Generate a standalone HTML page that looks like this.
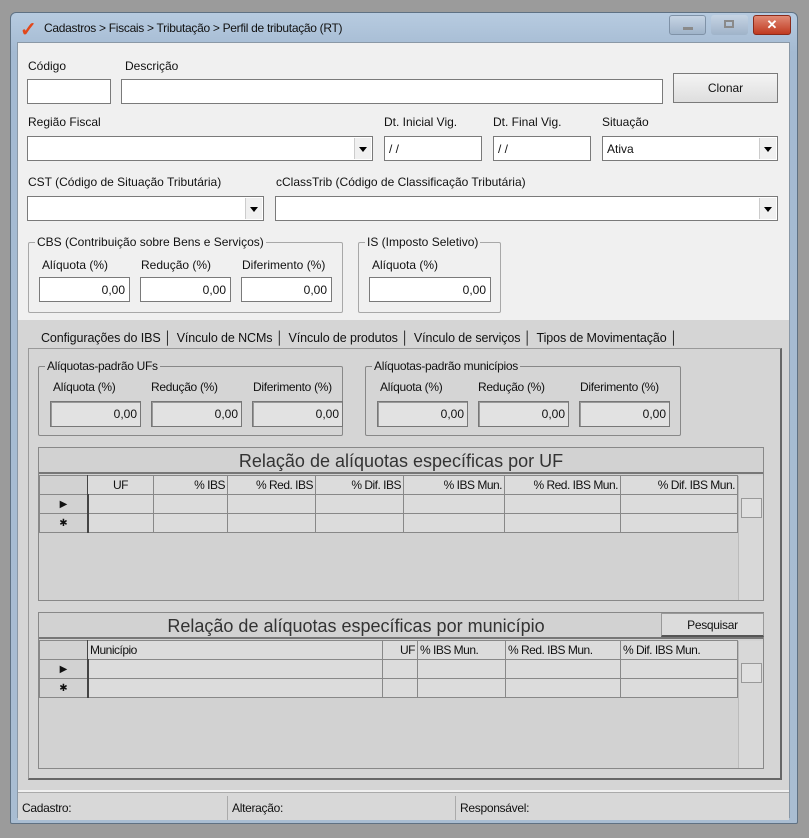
<!DOCTYPE html>
<html><head><meta charset="utf-8"><style>
*{box-sizing:border-box;margin:0;padding:0}
body{width:809px;height:838px;background:#9b9b9b;position:relative;overflow:hidden;font-family:"Liberation Sans",sans-serif;font-size:12px;color:#111}
.a{position:absolute}
.win{left:10px;top:12px;width:788px;height:812px;background:linear-gradient(#b7cbe0,#a4bad2 40px,#a9bdd2);border:1px solid #5f7183;border-radius:6px 6px 2px 2px}
.client{left:17px;top:42px;width:773px;height:776px;background:#f0f0f0;border:1px solid #8a98a6}
.in{position:absolute;background:#fff;border:1px solid #7a7a7a;height:25px;font-size:12px;padding:5px 4px;text-align:right}
.lb{position:absolute;font-size:12px;white-space:nowrap}
.dd{position:absolute;right:1px;top:1px;width:17px;bottom:1px;background:#f0f0f0;border-left:1px solid #ccc}
.dd:after{content:"";position:absolute;left:4px;top:9px;border:4.5px solid transparent;border-top:5px solid #000}
.grp{position:absolute;border:1px solid #a8a8a8;border-radius:2px}
.grp>span{position:absolute;top:-8px;left:6px;background:inherit;padding:0 2px;font-size:12px;white-space:nowrap}
.low{left:18px;top:320px;width:771px;height:470px;background:#d5d5d5}
.l2{font-size:12px;letter-spacing:-0.3px}
.ro{position:absolute;background:#e2e2e2;border:1px solid #777;height:26px;font-size:12px;padding:5px 3px;text-align:right;box-shadow:inset 1px 1px 0 #999}
.panel{position:absolute;border:1px solid #888;background:#d2d2d2}
.title{position:absolute;left:0;right:0;top:0;height:26px;border-bottom:2px solid #777;font-size:18px;text-align:center;color:#333;line-height:26px}
table{position:absolute;border-collapse:collapse;font-size:12px;letter-spacing:-0.5px}
td{border:1px solid #888;background:#dcdcdc;height:19px;padding:0 2px;white-space:nowrap;text-align:right;overflow:hidden}
td.rh{background:#d2d2d2;border-right:2px solid #444;text-align:center;font-size:10px}
.st{position:absolute;top:796px;height:24px;font-size:12px;letter-spacing:-0.3px;padding:5px 4px;border-right:1px solid #aaa}
.tabs span{display:inline-block;margin-right:5px}
</style></head><body>
<div class="a win"></div>
<div class="a" style="left:20px;top:17px;font-size:20px;color:#e2481b;font-weight:bold">✓</div>
<div class="a" style="left:44px;top:21px;font-size:12px;letter-spacing:-0.3px;color:#111">Cadastros &gt; Fiscais &gt; Tributação &gt; Perfil de tributação (RT)</div>
<div class="a" style="left:669px;top:15px;width:37px;height:20px;border:1px solid #7f92a7;border-radius:3px;background:linear-gradient(#c6d4e4,#9fb3c9)"><div class="a" style="left:13px;top:11px;width:10px;height:3px;background:#8a8a8a"></div></div>
<div class="a" style="left:711px;top:15px;width:37px;height:20px;border-radius:3px;background:linear-gradient(#c6d4e4,#9fb3c9)"><div class="a" style="left:13px;top:5px;width:10px;height:8px;border:2px solid #8a8a8a"></div></div>
<div class="a" style="left:753px;top:15px;width:38px;height:20px;border:1px solid #8a2a1a;border-radius:3px;background:linear-gradient(#e08a76,#c03a20);color:#fff;font-weight:bold;text-align:center;font-size:13px;line-height:18px">✕</div>
<div class="a client"></div>

<div class="lb" style="left:28px;top:59px">Código</div>
<div class="lb" style="left:125px;top:59px">Descrição</div>
<div class="in" style="left:27px;top:79px;width:84px"></div>
<div class="in" style="left:121px;top:79px;width:542px"></div>
<div class="a" style="left:673px;top:73px;width:105px;height:30px;border:1px solid #7a7a7a;background:linear-gradient(#f4f4f4,#dedede);text-align:center;line-height:28px">Clonar</div>

<div class="lb" style="left:28px;top:115px">Região Fiscal</div>
<div class="lb" style="left:384px;top:115px">Dt. Inicial Vig.</div>
<div class="lb" style="left:493px;top:115px">Dt. Final Vig.</div>
<div class="lb" style="left:602px;top:115px">Situação</div>
<div class="in" style="left:27px;top:136px;width:346px"><div class="dd"></div></div>
<div class="in" style="left:384px;top:136px;width:98px;text-align:left">/ /</div>
<div class="in" style="left:493px;top:136px;width:98px;text-align:left">/ /</div>
<div class="in" style="left:602px;top:136px;width:176px;text-align:left">Ativa<div class="dd"></div></div>

<div class="lb" style="left:28px;top:175px">CST (Código de Situação Tributária)</div>
<div class="lb" style="left:276px;top:175px">cClassTrib (Código de Classificação Tributária)</div>
<div class="in" style="left:27px;top:196px;width:237px"><div class="dd"></div></div>
<div class="in" style="left:275px;top:196px;width:503px"><div class="dd"></div></div>

<div class="grp" style="left:28px;top:242px;width:315px;height:71px;background:#f0f0f0"><span>CBS (Contribuição sobre Bens e Serviços)</span></div>
<div class="lb" style="left:42px;top:258px">Alíquota (%)</div>
<div class="lb" style="left:141px;top:258px">Redução (%)</div>
<div class="lb" style="left:242px;top:258px">Diferimento (%)</div>
<div class="in" style="left:39px;top:277px;width:91px">0,00</div>
<div class="in" style="left:140px;top:277px;width:91px">0,00</div>
<div class="in" style="left:241px;top:277px;width:91px">0,00</div>
<div class="grp" style="left:358px;top:242px;width:143px;height:71px;background:#f0f0f0"><span>IS (Imposto Seletivo)</span></div>
<div class="lb" style="left:372px;top:258px">Alíquota (%)</div>
<div class="in" style="left:369px;top:277px;width:122px">0,00</div>

<div class="a low"></div>
<div class="a" style="left:18px;top:320px;width:771px;height:470px">
<div class="lb tabs" style="left:23px;top:11px;font-size:12.5px;letter-spacing:-0.1px"><span>Configurações do IBS │</span><span>Vínculo de NCMs │</span><span>Vínculo de produtos │</span><span>Vínculo de serviços │</span><span>Tipos de Movimentação │</span></div>
<div class="a" style="left:10px;top:28px;width:754px;height:432px;border:1px solid #999;border-bottom:2px solid #666;border-right:2px solid #666"></div>
</div>
<div class="grp" style="left:38px;top:366px;width:305px;height:70px;background:#d5d5d5;border-color:#888"><span class="l2">Alíquotas-padrão UFs</span></div>
<div class="lb l2" style="left:53px;top:380px">Alíquota (%)</div>
<div class="lb l2" style="left:151px;top:380px">Redução (%)</div>
<div class="lb l2" style="left:253px;top:380px">Diferimento (%)</div>
<div class="ro" style="left:50px;top:401px;width:91px">0,00</div>
<div class="ro" style="left:151px;top:401px;width:91px">0,00</div>
<div class="ro" style="left:252px;top:401px;width:91px">0,00</div>
<div class="grp" style="left:365px;top:366px;width:316px;height:70px;background:#d5d5d5;border-color:#888"><span class="l2">Alíquotas-padrão municípios</span></div>
<div class="lb l2" style="left:380px;top:380px">Alíquota (%)</div>
<div class="lb l2" style="left:478px;top:380px">Redução (%)</div>
<div class="lb l2" style="left:580px;top:380px">Diferimento (%)</div>
<div class="ro" style="left:377px;top:401px;width:91px">0,00</div>
<div class="ro" style="left:478px;top:401px;width:91px">0,00</div>
<div class="ro" style="left:579px;top:401px;width:91px">0,00</div>

<div class="panel" style="left:38px;top:447px;width:726px;height:154px">
<div class="title">Relação de alíquotas específicas por UF</div>
<div class="a" style="left:699px;top:28px;width:25px;height:124px;background:#d8d8d8;border-left:1px solid #bbb"><div class="a" style="left:2px;top:22px;width:21px;height:20px;border:1px solid #999;background:#e0e0e0"></div></div>
<table style="left:0;top:27px;width:699px">
<tr><td class="rh" style="width:48px;border-right-width:1px"></td><td style="width:66px;text-align:center">UF</td><td style="width:74px">% IBS</td><td style="width:88px">% Red. IBS</td><td style="width:88px">% Dif. IBS</td><td style="width:101px">% IBS Mun.</td><td style="width:116px">% Red. IBS Mun.</td><td>% Dif. IBS Mun.</td></tr>
<tr><td class="rh">▶</td><td></td><td></td><td></td><td></td><td></td><td></td><td></td></tr>
<tr><td class="rh">✱</td><td></td><td></td><td></td><td></td><td></td><td></td><td></td></tr>
</table></div>

<div class="panel" style="left:38px;top:612px;width:726px;height:157px">
<div class="title" style="padding-right:90px">Relação de alíquotas específicas por município</div>
<div class="a" style="left:622px;top:0;width:103px;height:24px;border:1px solid #999;border-bottom:2px solid #555;background:#dcdcdc;font-size:12px;text-align:center;line-height:22px;letter-spacing:-.3px">Pesquisar</div>
<div class="a" style="left:699px;top:28px;width:25px;height:127px;background:#d8d8d8;border-left:1px solid #bbb"><div class="a" style="left:2px;top:22px;width:21px;height:20px;border:1px solid #999;background:#e0e0e0"></div></div>
<table style="left:0;top:27px;width:699px">
<tr><td class="rh" style="width:48px;border-right-width:1px"></td><td style="width:295px;text-align:left">Município</td><td style="width:35px">UF</td><td style="width:88px;text-align:left">% IBS Mun.</td><td style="width:115px;text-align:left">% Red. IBS Mun.</td><td style="text-align:left">% Dif. IBS Mun.</td></tr>
<tr><td class="rh">▶</td><td></td><td></td><td></td><td></td><td></td></tr>
<tr><td class="rh">✱</td><td></td><td></td><td></td><td></td><td></td></tr>
</table></div>

<div class="a" style="left:18px;top:792px;width:771px;height:28px;background:#d8d8d8;border-top:1px solid #aaa"></div>
<div class="st" style="left:18px;width:210px">Cadastro:</div>
<div class="st" style="left:228px;width:228px">Alteração:</div>
<div class="st" style="left:456px;width:300px;border:none">Responsável:</div>
</body></html>
